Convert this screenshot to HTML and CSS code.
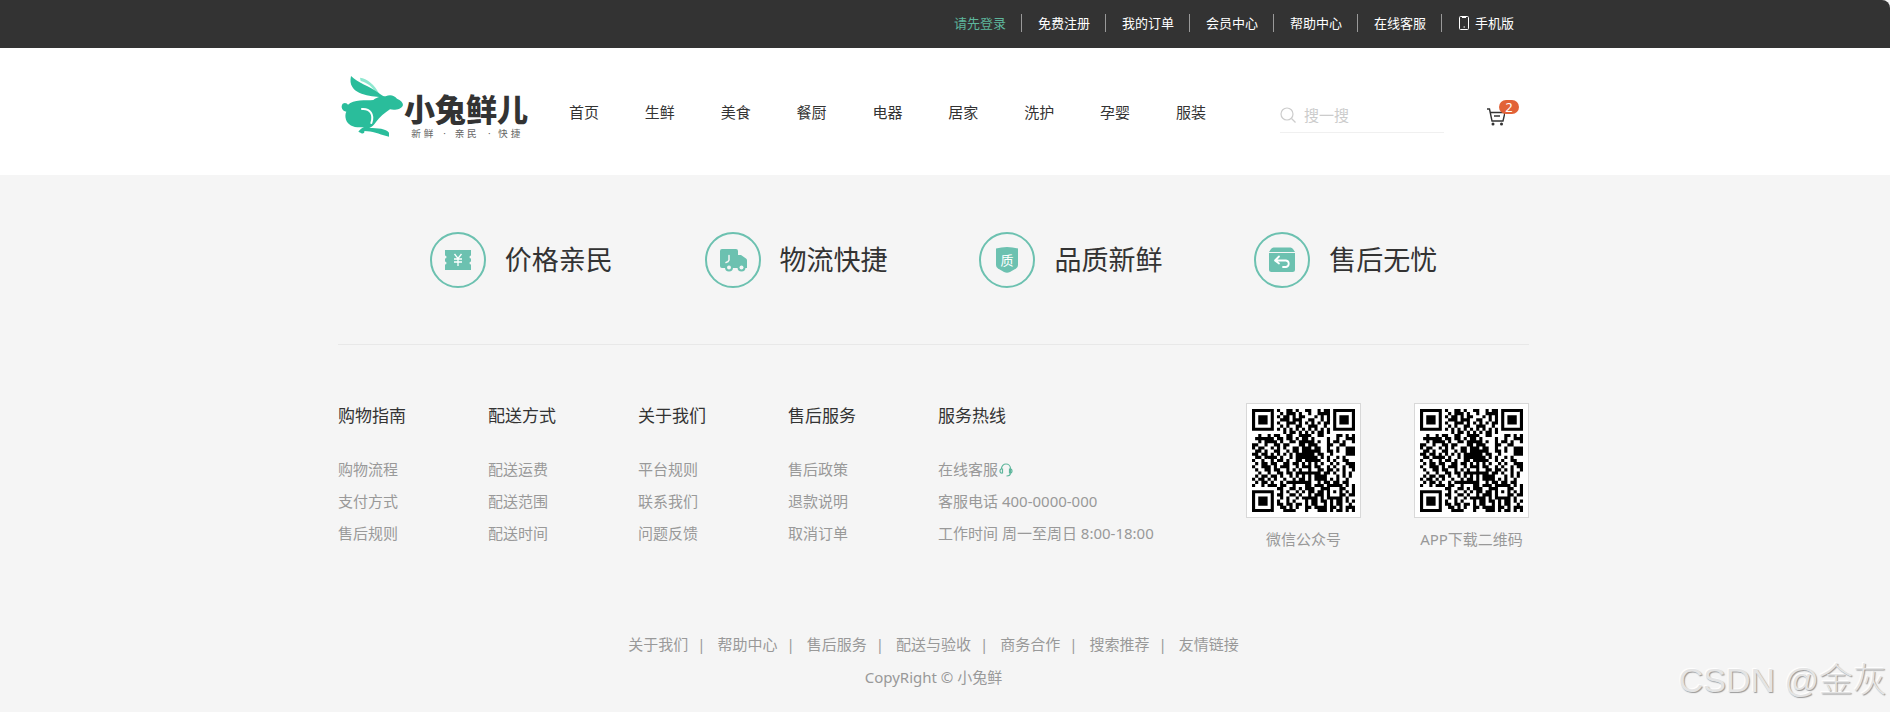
FILE: index.html
```html
<!DOCTYPE html>
<html lang="zh-CN">
<head>
  <meta charset="UTF-8">
  <meta name="viewport" content="width=device-width, initial-scale=1.0">
  <title>小兔鲜儿</title>
  <link rel="stylesheet" href="styles.css">
</head>
<body>

<!-- 快捷导航 -->
<div class="shortcut">
  <ul class="wrapper shortcut-list">
    <li><a href="#" class="login">请先登录</a></li>
    <li><a href="#">免费注册</a></li>
    <li><a href="#">我的订单</a></li>
    <li><a href="#">会员中心</a></li>
    <li><a href="#">帮助中心</a></li>
    <li><a href="#">在线客服</a></li>
    <li>
      <a href="#">
        <svg class="icon-phone" viewBox="0 0 12 14" fill="none" stroke="#fff"><rect x="1.5" y=".5" width="9" height="13" rx="1"/><path d="M4 1.5h4M5.5 11h1.5"/></svg>
        手机版
      </a>
    </li>
  </ul>
</div>

<!-- 头部 -->
<header class="header">
  <div class="wrapper header-inner">
    <a href="#" class="logo" aria-label="小兔鲜儿">
      <svg viewBox="24 37 588 234">
        <path fill="#8fe8d0" d="M90 51C110 53 136 74 146 97L137 97C128 79 112 66 92 61Z"/>
        <path fill="#2abd9b" d="M63 46C82 66 119 77 145 96C154 103 160 107 167 107C180 100 193 104 201 114C212 118 219 125 219 133C215 146 193 150 180 146C165 156 148 170 138 184C132 193 126 199 118 202C143 202 168 204 177 216L177 228C156 224 134 213 112 212L103 211C105 217 98 221 93 217L85 213C91 206 96 202 102 199C76 203 54 195 48 177C45 167 46 158 49 153C37 151 31 139 38 129C45 124 52 128 54 132C70 116 108 120 130 118C136 113 144 110 148 109C113 106 51 99 63 46Z"/>
        <path fill="none" stroke="#fff" stroke-width="6" stroke-linecap="round" d="M96 145C120 143 133 161 124 187"/>
        <text class="logo-name" x="222" y="181">小兔鲜儿</text>
        <text class="logo-slogan" y="230"><tspan x="244">新</tspan><tspan x="281">鲜</tspan><tspan x="340">·</tspan><tspan x="374">亲</tspan><tspan x="411">民</tspan><tspan x="474">·</tspan><tspan x="504">快</tspan><tspan x="542">捷</tspan></text>
      </svg>
    </a>
    <nav class="nav">
      <a href="#">首页</a>
      <a href="#">生鲜</a>
      <a href="#">美食</a>
      <a href="#">餐厨</a>
      <a href="#">电器</a>
      <a href="#">居家</a>
      <a href="#">洗护</a>
      <a href="#">孕婴</a>
      <a href="#">服装</a>
    </nav>
    <div class="search">
      <svg viewBox="0 0 16 16" fill="none" stroke="#ccc" stroke-width="1.2"><circle cx="7" cy="7" r="6"/><path d="M11.5 11.5L15.5 15.5"/></svg>
      <input type="text" placeholder="搜一搜" aria-label="搜一搜">
    </div>
    <a href="#" class="cart" aria-label="购物车">
      <svg viewBox="0 0 18 18" fill="none" stroke="#333" stroke-width="1.4"><path d="M0 1h2.5L5 13h11L18 4.500H3.500M7 8h6"/><circle cx="6" cy="16" r=".8" fill="#333"/><circle cx="14.500" cy="16" r=".8" fill="#333"/></svg>
      <span class="badge">2</span>
    </a>
  </div>
</header>

<!-- 底部 -->
<footer class="footer">
  <div class="wrapper">
    <div class="service">
      <div class="service-item">
        <span class="circle">
          <svg viewBox="0 0 28 28"><path fill="#6cc1b0" d="M1 4h26v5.500a1 1 0 0 0 0 3v3a1 1 0 0 0 0 3V24H1v-5.500a1 1 0 0 0 0-3v-3a1 1 0 0 0 0-3z"/><path stroke="#fff" stroke-width="1.3" fill="none" d="M10.500 8l3.500 4.500L17.500 8M10 13h8M10 16h8M14 12.500V20"/></svg>
        </span>
        <h5>价格亲民</h5>
      </div>
      <div class="service-item">
        <span class="circle">
          <svg viewBox="0 0 28 28"><path fill="#6cc1b0" d="M3 3h14q2 0 2 2v4h3l5 3.500q1 .5 1 2V22H3q-2 0-2-2V5q0-2 2-2z"/><g fill="#6cc1b0" stroke="#6cc1b0" stroke-width="2"><circle cx="10" cy="21.500" r="3"/><circle cx="22.500" cy="21.500" r="3"/></g><g fill="#f5f5f5"><circle cx="10" cy="21.500" r="2"/><circle cx="22.500" cy="21.500" r="2"/></g><path stroke="#f5f5f5" stroke-width="1.5" stroke-linecap="round" fill="none" d="M10 9.500v4.500q-.5 2-3 2.500"/></svg>
        </span>
        <h5>物流快捷</h5>
      </div>
      <div class="service-item">
        <span class="circle">
          <svg viewBox="0 0 28 28"><path fill="#6cc1b0" d="M3 2.500Q14-.5 25 2.500V19q0 2-2 3.500L17 26q-3 1.500-6 0L5 22.500Q3 21 3 19z"/><text class="shield-text" x="7.500" y="18.500">质</text></svg>
        </span>
        <h5>品质新鲜</h5>
      </div>
      <div class="service-item">
        <span class="circle">
          <svg viewBox="0 0 28 28"><path fill="#6cc1b0" d="M5.500 1.500h17q1.500 0 2.500 1.500l2 3H1l2-3q1-1.500 2.500-1.500zM1 7h26v16.500q0 2.500-2.500 2.500h-21Q1 26 1 23.500z"/><path stroke="#fff" stroke-width="1.800" fill="none" stroke-linecap="round" stroke-linejoin="round" d="M11 10.500L7 14.500l4 3M7.500 14.500H18a3.300 3.300 0 0 1 0 6.500h-3"/></svg>
        </span>
        <h5>售后无忧</h5>
      </div>
    </div>

    <div class="help">
      <dl>
        <dt>购物指南</dt>
        <dd><a href="#">购物流程</a></dd>
        <dd><a href="#">支付方式</a></dd>
        <dd><a href="#">售后规则</a></dd>
      </dl>
      <dl>
        <dt>配送方式</dt>
        <dd><a href="#">配送运费</a></dd>
        <dd><a href="#">配送范围</a></dd>
        <dd><a href="#">配送时间</a></dd>
      </dl>
      <dl>
        <dt>关于我们</dt>
        <dd><a href="#">平台规则</a></dd>
        <dd><a href="#">联系我们</a></dd>
        <dd><a href="#">问题反馈</a></dd>
      </dl>
      <dl>
        <dt>售后服务</dt>
        <dd><a href="#">售后政策</a></dd>
        <dd><a href="#">退款说明</a></dd>
        <dd><a href="#">取消订单</a></dd>
      </dl>
      <dl class="hotline">
        <dt>服务热线</dt>
        <dd><a href="#">在线客服<svg class="icon-service" viewBox="0 0 14 14" fill="none" stroke="#5eb69c" stroke-width="1.200"><path d="M2.500 6V5.500a4.500 4.500 0 0 1 9 0V10q0 3-4 3M3.500 6v4Q1 10.500 1 8t2.500-2zM10.500 6v4Q13 10.500 13 8t-2.500-2z"/></svg></a></dd>
        <dd>客服电话 400-0000-000</dd>
        <dd>工作时间 周一至周日 8:00-18:00</dd>
      </dl>
      <div class="qrcodes">
        <figure>
          <svg class="qrcode" viewBox="0 0 33 33"></svg>
          <figcaption>微信公众号</figcaption>
        </figure>
        <figure>
          <svg class="qrcode" viewBox="0 0 33 33"></svg>
          <figcaption>APP下载二维码</figcaption>
        </figure>
      </div>
    </div>

    <div class="copyright">
      <p class="links">
        <a href="#">关于我们</a><span>|</span>
        <a href="#">帮助中心</a><span>|</span>
        <a href="#">售后服务</a><span>|</span>
        <a href="#">配送与验收</a><span>|</span>
        <a href="#">商务合作</a><span>|</span>
        <a href="#">搜索推荐</a><span>|</span>
        <a href="#">友情链接</a>
      </p>
      <p>CopyRight © 小兔鲜</p>
    </div>
  </div>
</footer>

<div class="watermark">CSDN @金灰</div>

<script src="qrcode.js"></script>
</body>
</html>
```
FILE: styles.css
```css
* {
  margin: 0;
  padding: 0;
  box-sizing: border-box;
}
body {
  font-family: "Noto Sans", "Noto Sans CJK SC", sans-serif;
  font-size: 15px;
  color: #333;
  background-color: #f5f5f5;
}
ul {
  list-style: none;
}
a {
  color: inherit;
  text-decoration: none;
}
svg {
  display: block;
}
.wrapper {
  width: 100%;
  max-width: 1191px;
  margin: 0 auto;
}
/* 右侧留出滚动条的宽度 */
.shortcut, .header, .footer {
  padding-right: 23px;
}

/* 快捷导航 */
.shortcut {
  background-color: #333;
  border-top-right-radius: 8px;
}
.shortcut-list {
  display: flex;
  justify-content: flex-end;
  align-items: center;
  height: 48px;
  padding-bottom: 2px;
}
.shortcut-list li {
  padding: 0 15px 0 16px;
  border-right: 1px solid #999;
  font-size: 13px;
  line-height: 18px;
  color: #fff;
}
.shortcut-list li:last-child {
  border-right: 0;
}
.shortcut-list a {
  display: flex;
  align-items: center;
  gap: 5px;
}
.shortcut-list .login {
  color: #5eb69c;
}
.icon-phone {
  width: 12px;
  height: 14px;
}

/* 头部 */
.header {
  background-color: #fff;
}
.header-inner {
  display: flex;
  align-items: center;
  height: 127px;
}
.logo svg {
  width: 196px;
  height: 78px;
}
.logo-name {
  font-size: 93px;
  font-weight: 900;
  fill: #333;
}
.logo-slogan {
  font-size: 29px;
  fill: #666;
}
.nav {
  flex: 1;
  display: flex;
  justify-content: space-between;
  margin: 0 74px 0 35px;
}
.search {
  display: flex;
  align-items: center;
  gap: 8px;
  width: 164px;
  height: 34px;
  margin-top: 8px;
  border-bottom: 1px solid #f0f0f0;
}
.search svg {
  width: 16px;
  height: 16px;
}
.search input {
  flex: 1;
  min-width: 0;
  border: 0;
  outline: none;
  background: none;
  font: inherit;
}
.search input::placeholder {
  color: #ccc;
}
.cart {
  position: relative;
  margin: 10px 24px 0 43px;
}
.cart svg {
  width: 18px;
  height: 18px;
}
.badge {
  position: absolute;
  top: -8px;
  left: 12px;
  width: 20px;
  height: 14px;
  border-radius: 7px;
  background-color: #e26237;
  color: #fff;
  font-size: 13px;
  line-height: 14px;
  text-align: center;
}

/* 服务 */
.service {
  display: flex;
  justify-content: space-evenly;
  padding: 57px 0 56px;
  border-bottom: 1px solid #e8e8e8;
}
.service-item {
  display: flex;
  align-items: center;
  gap: 19px;
}
.service-item h5 {
  font-size: 27px;
  font-weight: 400;
  line-height: 56px;
}
.circle {
  display: flex;
  align-items: center;
  justify-content: center;
  width: 56px;
  height: 56px;
  border: 2px solid #6cc1b0;
  border-radius: 50%;
}
.circle svg {
  width: 28px;
  height: 28px;
}
.shield-text {
  font-size: 13px;
  fill: #fff;
}

/* 帮助中心 */
.help {
  display: flex;
  padding-top: 58px;
  color: #999;
}
.help dl {
  width: 150px;
}
.help .hotline {
  width: 250px;
}
.help dt {
  margin-bottom: 24px;
  font-size: 17px;
  line-height: 26px;
  color: #333;
}
.help dd {
  line-height: 32px;
}
.icon-service {
  display: inline-block;
  width: 14px;
  height: 14px;
  margin-left: 1px;
  vertical-align: -2px;
}
.qrcodes {
  display: flex;
  gap: 53px;
  margin-left: auto;
}
.qrcodes figure {
  width: 115px;
}
.qrcode {
  width: 115px;
  height: 115px;
  padding: 5px;
  border: 1px solid #d8d8d8;
  background-color: #fff;
}
.qrcodes figcaption {
  margin-top: 10px;
  line-height: 22px;
  text-align: center;
  white-space: nowrap;
}

/* 版权 */
.copyright {
  padding: 78px 0 17px;
  color: #999;
  line-height: 33px;
  text-align: center;
}
.links {
  display: flex;
  justify-content: center;
}
.links span {
  margin: 0 12px 0 9px;
}

.watermark {
  position: absolute;
  right: 3px;
  bottom: 8px;
  font-family: "Liberation Sans", "Noto Sans CJK SC", sans-serif;
  font-size: 34px;
  font-weight: 300;
  line-height: 48px;
  color: #e4e4e4;
  text-shadow: 1px 1px 1px #999, -1px -1px 1px #fff;
}
```
FILE: qrcode.js
```javascript
// 二维码点阵，# 为黑色
const rows = [
  '#######.#..##.#..##..#.##.#######',
  '#.....#..#.###.#..#..####.#.....#',
  '#.###.#.#.##.#.##...#.#.#.#.###.#',
  '#.###.#..###.###..##..#.#.#.###.#',
  '#.###.#.#..###.#.#.#.#.##.#.###.#',
  '#.....#..#.#..##..###..#..#.....#',
  '#######.#.#.#.#.#.#.#.#.#.#######',
  '..........#.##.#.#.#.##.#........',
  '..#..#.##..##..####..##....##.#.#',
  '.######.##.##.#.##.#....#..#..###',
  '..#.####.#..##.#####.#..#.##.#..#',
  '##..#..##.##...##.###...##..##...',
  '#.##..#.#.#..##.###.##..#..#..###',
  '.##.#..##..#.##.######..##.#..###',
  '##.##.#.#.#.#.######.##..#....###',
  '.##.####.#..#.#######.#.#..#.#...',
  '#..#..#.##.#..##.#####..#.#..##..',
  '.#.##.##..##.##.#.#.#.#..#.#..###',
  '#..###.#.###..#.###.##..#.#..#.##',
  '.#..##.##..#.#.#..#..##.##.#.#..#',
  '..#..#..##.##.########.##.#..#.#.',
  '.#.##.##.#..#.#.#.#.####...#.#.#.',
  '#.##.#.#..#..#.##.#.####.#.#..#..',
  '.#.##.#..#.########..#.##.##.##..',
  '#..#.###.##..#...##.###.#####.#.#',
  '........##..##.#.###..###...##..#',
  '#######..#.#..#.#.##.##.#.#.#.#.#',
  '#.....#.##..##.#..#.###.#...##.##',
  '#.###.#..#.#..#.#####.#.#####.#..',
  '#.###.#.#..#.#...#.##.##.#.##.#.#',
  '#.###.#.##.##.##.#.##..#.#.##..#.',
  '#.....#..##.#.#..##.####.##.#.###',
  '#######...####...#...###.#.##.#.#'
];

let d = '';
rows.forEach((row, y) => {
  [...row].forEach((cell, x) => {
    if (cell === '#') {
      d += `M${x} ${y}h1v1h-1z`;
    }
  });
});

document.querySelectorAll('.qrcode').forEach(svg => {
  const path = document.createElementNS('http://www.w3.org/2000/svg', 'path');
  path.setAttribute('d', d);
  svg.appendChild(path);
});
```
